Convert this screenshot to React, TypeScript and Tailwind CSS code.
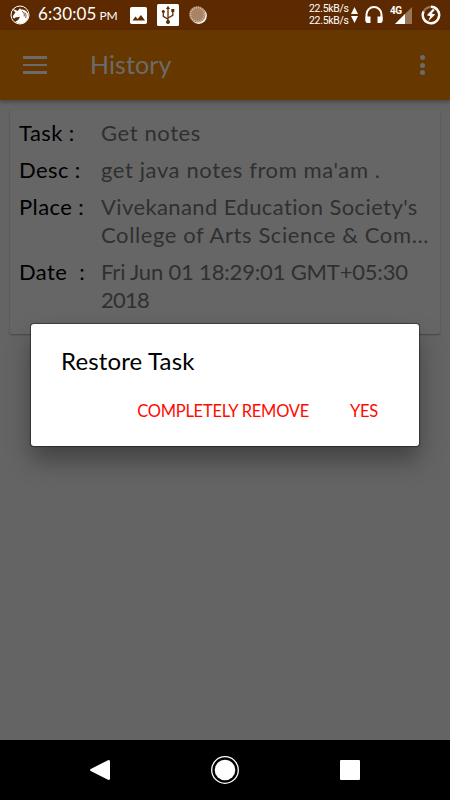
import React from 'react';

interface RowProps {
  label: string;
  children: React.ReactNode;
}

const Unicorn = () => (
  <svg className="w-5 h-5" viewBox="0 0 20 20" fill="none">
    <circle cx="10" cy="10" r="9" stroke="#fff" strokeWidth="1" />
    <path fill="#fff" d="M2 3.600 7.600 6 10 3.200l1 1.400c3.800-.2 6.600 2 7.400 5.400.2 4-2.600 7.600-6.400 8.600-2.600.4-5.400-.6-6.600-2.200 2.200-.6 4.200-2.400 4.400-4.600-1.600.6-2.800.2-3.800.4l-1.800 1.400-1.400-1 .4-2 2.200-3Z" />
    <path stroke="#5d2900" strokeWidth=".8" d="M12 6.200c2 1.200 2.600 3 2.200 5.200M14.800 7.600c1.400 1.600 1.600 3.600.8 5.400" />
  </svg>
);

const Usb = () => (
  <svg className="w-[22px] h-[22px]" viewBox="0 0 22 22" fill="none">
    <rect width="22" height="22" rx="1.500" fill="#fff" />
    <g stroke="#5d2900" strokeWidth="1.300">
      <path d="M11 4v14M11 15.300 6.300 12.300V8.500M11 14l4.800-2.700V7" />
    </g>
    <path fill="#5d2900" d="m11 1.800 2 3.200H9Z" />
    <path fill="#5d2900" d="M14.300 5h3v3h-3z" />
    <circle cx="6.300" cy="7.500" r="1.500" fill="#5d2900" />
    <circle cx="11" cy="18" r="2" fill="#5d2900" />
  </svg>
);

const StatusBar = () => (
  <div className="h-[30px] bg-[#5d2900] flex items-center justify-between pl-[10px] pr-[9px] text-white">
    <div className="flex items-center">
      <Unicorn />
      <div className="ml-[8px] w-[78px] flex items-baseline whitespace-nowrap font-['Lato',sans-serif]">
        <span className="text-[17px] leading-5 tracking-[0.1px]">6:30:05</span>
        <span className="ml-[3px] text-[12px] leading-5 tracking-[-0.3px]">PM</span>
      </div>
      <svg className="ml-[14px] w-[17px] h-[17px]" viewBox="0 0 17 17">
        <rect width="17" height="17" rx="1.800" fill="#fff" />
        <path fill="#5d2900" d="M2.500 13.500 5.500 9.500l2.200 2.600L11 8l4 5.500Z" />
      </svg>
      <div className="ml-[10px]"><Usb /></div>
      <svg className="ml-[10px] w-[18px] h-[18px]" viewBox="0 0 18 18" fill="none">
        <circle cx="9.700" cy="9.700" r="8.200" fill="#f8f2ec" />
        <circle cx="8.400" cy="8.400" r="8.200" fill="#a98464" />
        <circle cx="8.400" cy="8.400" r="6.900" stroke="#d4bda8" strokeWidth="1.500" strokeDasharray="1 1.200" />
      </svg>
    </div>
    <div className="flex items-center">
      <div className="w-[41px] text-[10.5px] leading-[12.5px] tracking-[-0.3px] whitespace-nowrap font-['Roboto',sans-serif]">
        <div>22.5kB/s</div>
        <div>22.5kB/s</div>
      </div>
      <svg className="ml-[1px] w-[7px] h-4" viewBox="0 0 7 16" fill="#fff">
        <path d="M3.500 0 7 7H0ZM0 9h7l-3.500 7Z" />
      </svg>
      <svg className="ml-[7px] w-[18px] h-[18px]" viewBox="0 0 18 18" fill="none">
        <path stroke="#fff" strokeWidth="2" d="M1.500 15V8.500a7.500 7.500 0 0 1 15 0V15" />
        <path fill="#fff" d="M.5 10.500h5V17H2.500a2 2 0 0 1-2-2ZM12.500 10.500h5V15a2 2 0 0 1-2 2h-3Z" />
      </svg>
      <div className="relative ml-[6px] mr-[1px] w-[24px] h-[20px]">
        <svg className="w-full h-full" viewBox="0 0 24 20">
          <path fill="#9a7658" d="M23 2v17H6Z" />
          <path fill="#fff" d="M16 9v10H6Z" />
        </svg>
        <span className="absolute left-[1px] top-[1px] text-[10px] leading-[10px] font-bold tracking-[-0.5px] font-['Roboto',sans-serif]">4G</span>
      </div>
      <svg className="ml-[7px] w-5 h-5" viewBox="0 0 20 20" fill="none">
        <circle cx="10" cy="10" r="8.200" stroke="#9a7658" strokeWidth="2.200" />
        <path stroke="#fff" strokeWidth="2.400" d="M10 1.800A8.200 8.200 0 1 1 2.500 6.600" />
        <path fill="#fff" d="m11.800 4-6 6.200 3.400 1-1.800 4.800 6.800-6.400-3.600-1.200L14 4.800Z" />
      </svg>
    </div>
  </div>
);

const Toolbar = () => (
  <div className="h-[70px] bg-[#663800] flex items-center text-[#6b6b6b] shadow-[0_2px_4px_rgba(0,0,0,0.3)]">
    <div className="ml-[23px] w-6 flex flex-col gap-[5px]">
      <div className="h-[2.5px] bg-[#6b6b6b]" />
      <div className="h-[2.5px] bg-[#6b6b6b]" />
      <div className="h-[2.5px] bg-[#6b6b6b]" />
    </div>
    <h1 className="ml-[43px] pb-[2px] text-[25px] leading-8 tracking-[0.1px]">History</h1>
    <div className="ml-auto mr-[25px] flex flex-col gap-[2.5px]">
      <div className="size-[5px] rounded-full bg-[#6b6b6b]" />
      <div className="size-[5px] rounded-full bg-[#6b6b6b]" />
      <div className="size-[5px] rounded-full bg-[#6b6b6b]" />
    </div>
  </div>
);

const Row = ({ label, children }: RowProps) => (
  <div className="flex text-[22px] leading-7">
    <div className="w-[82px] shrink-0 whitespace-pre text-black tracking-[0.4px]">{label}</div>
    <div className="whitespace-nowrap text-[#303030] tracking-[0.6px]">{children}</div>
  </div>
);

const App = () => {
  return (
    <div className="relative w-[450px] h-[800px] flex flex-col overflow-hidden bg-[#646464] font-['Lato',sans-serif] [font-variant-ligatures:none]">
      <StatusBar />
      <Toolbar />

      <main className="flex-1 px-[10px] pt-[10px]">
        <div className="h-[224px] rounded-[2px] bg-[#666] pl-[9px] pt-[9px] flex flex-col gap-[9px] shadow-[0_1px_2px_rgba(0,0,0,0.3)]">
          <Row label="Task :">Get notes</Row>
          <Row label="Desc :">get java notes from ma'am .</Row>
          <Row label="Place :">
            <div className="tracking-[0.4px]">Vivekanand Education Society's</div>
            <div>College of Arts Science &amp; Com...</div>
          </Row>
          <Row label="Date  :">
            <div className="tracking-[-0.18px]">Fri Jun 01 18:29:01 GMT+05:30</div>
            <div className="tracking-[-0.8px]">2018</div>
          </Row>
        </div>
      </main>

      <nav className="h-[60px] bg-black flex items-center justify-between pl-[90px] pr-[90px]">
        <svg className="w-5 h-5" viewBox="0 0 20 20" fill="#fff">
          <path d="M.7 9 18 .2Q20-.4 20 1.500v17q0 1.900-2 1.300L.7 11q-1.400-1 0-2Z" />
        </svg>
        <svg className="w-7 h-7" viewBox="0 0 28 28" fill="none">
          <circle cx="14" cy="14" r="13.300" stroke="#fff" strokeWidth="1.300" />
          <circle cx="14" cy="14" r="10.300" fill="#fff" />
        </svg>
        <div className="w-5 h-5 rounded-[1px] bg-white" />
      </nav>

      <div className="absolute left-[31px] top-[324px] w-[388px] h-[122px] rounded-[3px] bg-white shadow-[0_0_1px_1px_rgba(0,0,0,0.4),0_14px_24px_rgba(0,0,0,0.35)]">
        <h2 className="ml-[30px] mt-[21px] text-[24px] leading-8 tracking-[0.15px] text-black">Restore Task</h2>
        <div className="mt-[23px] mr-[41px] flex justify-end gap-[41px] text-[16.5px] leading-[22px] tracking-[-0.25px] text-[#ff0a00]">
          <button>COMPLETELY REMOVE</button>
          <button>YES</button>
        </div>
      </div>
    </div>
  );
};

export default App;
